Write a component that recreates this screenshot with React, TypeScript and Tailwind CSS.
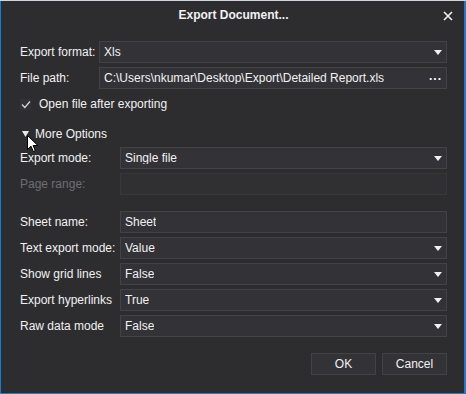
import React from 'react';

const FONT = { fontFamily: '"Liberation Sans", Arial, sans-serif' };

function Arrow() {
  return (
    <svg width="8" height="5" viewBox="0 0 8 5" className="shrink-0">
      <polygon points="0,0 8,0 4,5" fill="#f1f1f1" />
    </svg>
  );
}

function Field({ value, dropdown, disabled, dots }: { value?: string; dropdown?: boolean; disabled?: boolean; dots?: boolean }) {
  return (
    <div
      className={`flex h-[22px] flex-1 items-center justify-between border pl-[4px] pr-[4px] ${
        disabled ? 'border-[#38383c] bg-[#303033]' : 'border-[#434346] bg-[#333337]'
      }`}
    >
      <span className="truncate text-[12px] leading-none text-[#f1f1f1]">{value}</span>
      {dropdown && <Arrow />}
      {dots && <span className="pb-[5px] text-[12px] font-bold tracking-[1px] text-white">...</span>}
    </div>
  );
}

function Row({ label, labelW, disabled, children }: { label: string; labelW: string; disabled?: boolean; children: React.ReactNode }) {
  return (
    <div className="flex items-center">
      <span className={`${labelW} shrink-0 text-[12px] ${disabled ? 'text-[#6e6e72]' : 'text-[#f1f1f1]'}`}>{label}</span>
      {children}
    </div>
  );
}

export default function App() {
  return (
    <div style={FONT} className="relative flex h-[394px] w-[466px] flex-col border-t border-t-[#cfd6dd] bg-[#1d7bcf] pb-[1px] pl-[1px] pr-[2px]">
      <div className="flex flex-1 flex-col bg-[#2d2d30]">
        {/* title bar */}
        <div className="relative flex h-[28px] items-center justify-center">
          <span className="pl-[2px] text-[12px] font-bold text-[#f1f1f1]">Export Document...</span>
          <svg width="10" height="10" viewBox="0 0 10 10" className="absolute right-[11px] top-[10px]">
            <path d="M1 1 L9 9 M9 1 L1 9" stroke="#f1f1f1" strokeWidth="1.6" />
          </svg>
        </div>

        <div className="flex flex-col pl-[19px] pr-[17px] pt-[12px]">
          <div className="flex flex-col gap-[4px]">
            <Row label="Export format:" labelW="w-[79px]">
              <Field value="Xls" dropdown />
            </Row>
            <Row label="File path:" labelW="w-[79px]">
              <Field value="C:\Users\nkumar\Desktop\Export\Detailed Report.xls" dots />
            </Row>
          </div>

          <div className="mt-[8px] flex h-[14px] items-center gap-[8px]">
            <span className="flex h-[11px] w-[11px] items-center justify-center bg-[#333337]">
              <svg width="10" height="9" viewBox="0 0 10 9">
                <path d="M1 4.5 L3.8 7.5 L9 1.5" fill="none" stroke="#d8d8d8" strokeWidth="1.2" />
              </svg>
            </span>
            <span className="text-[12px] text-[#f1f1f1]">Open file after exporting</span>
          </div>

          <div className="mt-[16px] flex h-[14px] items-center gap-[6px] pl-[2px]">
            <svg width="7" height="6" viewBox="0 0 7 6">
              <polygon points="0,0 7,0 3.5,6" fill="#e8e8e8" />
            </svg>
            <span className="text-[12px] text-[#f1f1f1]">More Options</span>
          </div>

          <div className="mt-[6px] flex flex-col gap-[4px]">
            <Row label="Export mode:" labelW="w-[100px]">
              <Field value="Single file" dropdown />
            </Row>
            <Row label="Page range:" labelW="w-[100px]" disabled>
              <Field disabled />
            </Row>
          </div>

          <div className="mt-[16px] flex flex-col gap-[4px]">
            <Row label="Sheet name:" labelW="w-[100px]">
              <Field value="Sheet" />
            </Row>
            <Row label="Text export mode:" labelW="w-[100px]">
              <Field value="Value" dropdown />
            </Row>
            <Row label="Show grid lines" labelW="w-[100px]">
              <Field value="False" dropdown />
            </Row>
            <Row label="Export hyperlinks" labelW="w-[100px]">
              <Field value="True" dropdown />
            </Row>
            <Row label="Raw data mode" labelW="w-[100px]">
              <Field value="False" dropdown />
            </Row>
          </div>

          <div className="mt-[16px] flex justify-end gap-[6px]">
            <button className="flex h-[22px] w-[65px] items-center justify-center border border-[#434346] bg-[#333337] text-[12px] text-[#f1f1f1]">
              OK
            </button>
            <button className="flex h-[22px] w-[65px] items-center justify-center border border-[#434346] bg-[#333337] text-[12px] text-[#f1f1f1]">
              Cancel
            </button>
          </div>
        </div>
      </div>

      {/* mouse cursor */}
      <svg width="12" height="18" viewBox="0 0 12 18" className="absolute left-[27px] top-[134px]">
        <path d="M0.5 0.5 L0.5 14.5 L4 11.2 L6.3 16.5 L8.3 15.6 L6.1 10.5 L10.8 10.5 Z" fill="#ffffff" stroke="#000000" strokeWidth="1" />
      </svg>
    </div>
  );
}
